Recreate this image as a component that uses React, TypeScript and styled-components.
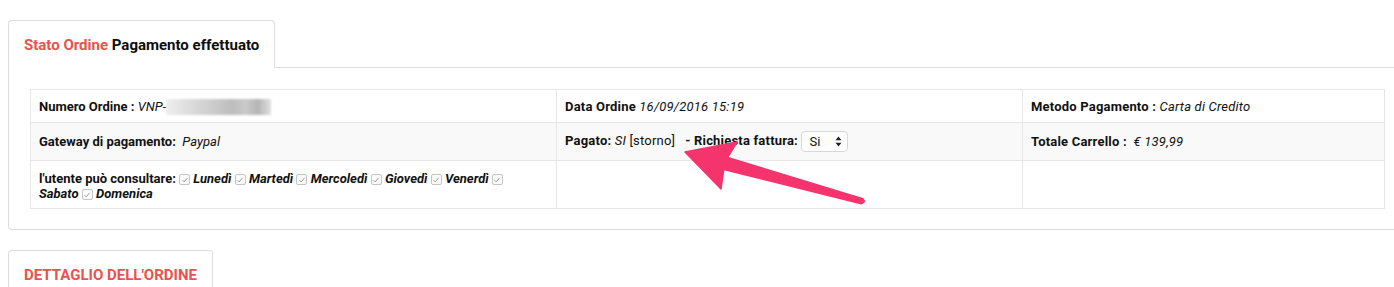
import React from 'react';
import styled, { createGlobalStyle } from 'styled-components';

const red = '#e9524e';
const line = '#dddddd';

const GlobalStyle = createGlobalStyle`
    html, body {
        margin: 0;
        padding: 0;
        overflow: hidden;
        background: #fff;
    }
    body {
        font-family: Roboto, "Liberation Sans", Arial, sans-serif;
        color: #111;
    }
`;

const days = ['Lunedì', 'Martedì', 'Mercoledì', 'Giovedì', 'Venerdì'];

const Check = () => (
    <CheckBox>
        <svg width="8" height="8" viewBox="0 0 8 8">
            <path d="M1.5 4.2 L3.2 5.9 L6.6 1.8" fill="none" stroke="#9a9a9a" strokeWidth="1" />
        </svg>
    </CheckBox>
);

const App: React.FC = () => {
    return (
        <Page>
            <GlobalStyle />
            <Section>
                <TabRow>
                    <Tab>
                        <Red>Stato Ordine</Red> Pagamento effettuato
                    </Tab>
                    <TabFiller />
                </TabRow>
                <Panel>
                    <Table>
                        <colgroup>
                            <col style={{ width: 526 }} />
                            <col style={{ width: 466 }} />
                            <col />
                        </colgroup>
                        <tbody>
                            <Row height={33}>
                                <Cell>
                                    <b>Numero Ordine :</b> <i>VNP-</i>
                                    <Blurred />
                                </Cell>
                                <Cell wide>
                                    <b>Data Ordine</b> <i>16/09/2016 15:19</i>
                                </Cell>
                                <Cell wide>
                                    <b>Metodo Pagamento :</b> <i>Carta di Credito</i>
                                </Cell>
                            </Row>
                            <Row height={38} striped>
                                <Cell>
                                    <b>Gateway di pagamento:</b>&nbsp; <i>Paypal</i>
                                </Cell>
                                <Cell wide>
                                    <b>Pagato:</b> <i>SI</i> [storno]
                                    <Spacer />
                                    <b>- Richiesta fattura:</b>{' '}
                                    <SelectBox>
                                        <Select defaultValue="si">
                                            <option value="si">Si</option>
                                            <option value="no">No</option>
                                        </Select>
                                        <svg width="7" height="11" viewBox="0 0 7 11">
                                            <path d="M3.5 0.5 L6.5 4.2 L0.5 4.2 Z M3.5 10.5 L6.5 6.8 L0.5 6.8 Z" fill="#222" />
                                        </svg>
                                    </SelectBox>
                                </Cell>
                                <Cell wide>
                                    <b>Totale Carrello :</b>&nbsp; <i>€ 139,99</i>
                                </Cell>
                            </Row>
                            <Row height={48}>
                                <DaysCell>
                                    <b>l'utente può consultare:</b>{' '}
                                    {days.map((d) => (
                                        <React.Fragment key={d}>
                                            <Check /> <Day>{d}</Day>{' '}
                                        </React.Fragment>
                                    ))}
                                    <Check />
                                    <br />
                                    <Day>Sabato</Day> <Check /> <Day>Domenica</Day>
                                </DaysCell>
                                <Cell />
                                <Cell />
                            </Row>
                        </tbody>
                    </Table>
                </Panel>
            </Section>
            <Section second>
                <TabRow>
                    <Tab>
                        <Red upper>Dettaglio dell'ordine</Red>
                    </Tab>
                </TabRow>
            </Section>
            <Annotation width="1394" height="287" viewBox="0 0 1394 287">
                <polygon
                    points="685,152 737,142 727.5,157.5 862.7,198.6 864.5,201.5 861.3,203.8 723.8,169.5 721,189"
                    fill="#f5346e"
                    stroke="#f5346e"
                    strokeWidth="1.5"
                    strokeLinejoin="round"
                />
            </Annotation>
        </Page>
    );
};

export default App;

const Page = styled.div`
    position: relative;
    width: 1394px;
    height: 287px;
    overflow: hidden;
    padding: 20px 0 0 8px;
    box-sizing: border-box;
`;

const Section = styled.div<{ second?: boolean }>`
    width: 1399px;
    margin-top: ${(p) => (p.second ? '20px' : '0')};
`;

const TabRow = styled.div`
    display: flex;
    align-items: stretch;
    height: 48px;
`;

const Tab = styled.div`
    display: flex;
    align-items: center;
    padding: 0 15px;
    border: 1px solid ${line};
    border-bottom: none;
    border-radius: 4px 4px 0 0;
    background: #fff;
    font-size: 15px;
    font-weight: 700;
    color: #0d0d0d;
    white-space: pre;
`;

const TabFiller = styled.div`
    flex: 1;
    border-bottom: 1px solid ${line};
`;

const Red = styled.span<{ upper?: boolean }>`
    color: ${red};
    text-transform: ${(p) => (p.upper ? 'uppercase' : 'none')};
`;

const Panel = styled.div`
    border: 1px solid ${line};
    border-top: none;
    border-radius: 0 0 4px 4px;
    padding: 21px 21px 20px 21px;
`;

const Table = styled.table`
    width: 1355px;
    border-collapse: collapse;
    table-layout: fixed;
    font-size: 13px;
    border: 1px solid ${line};

    b {
        font-weight: 700;
    }
    i {
        font-style: italic;
    }
`;

const Row = styled.tr<{ striped?: boolean; height: number }>`
    height: ${(p) => p.height}px;
    background: ${(p) => (p.striped ? '#f9f9f9' : '#fff')};
`;

const Cell = styled.td<{ wide?: boolean }>`
    border: 1px solid #e6e6e6;
    padding: 0 8px;
    vertical-align: middle;
    line-height: 17px;
    white-space: nowrap;
    letter-spacing: ${(p) => (p.wide ? '0.2px' : '0')};
`;

const DaysCell = styled(Cell)`
    line-height: 15px;
    padding-top: 2px;
`;

const Day = styled.span`
    font-weight: 700;
    font-style: italic;
`;

const Spacer = styled.span`
    display: inline-block;
    width: 10px;
`;

const CheckBox = styled.span`
    display: inline-flex;
    align-items: center;
    justify-content: center;
    width: 9px;
    height: 9px;
    border: 1px solid #c4c4c4;
    border-radius: 2px;
    background: #fbfbfb;
    vertical-align: -1px;
`;

const Blurred = styled.span`
    display: inline-block;
    width: 105px;
    height: 16px;
    vertical-align: -4px;
    background: linear-gradient(
        90deg,
        #eeeeee 0px,
        #e6e6e6 12px,
        #dcdcdc 24px,
        #d2d2d2 38px,
        #c8c8c8 52px,
        #bdbdbd 66px,
        #c9c9c9 80px,
        #b5b5b5 92px,
        #e2e2e2 105px
    );
    filter: blur(1.2px);
`;

const SelectBox = styled.span`
    display: inline-flex;
    align-items: center;
    gap: 9px;
    height: 19px;
    padding: 0 5px 0 7px;
    border: 1px solid #d8d8d8;
    border-radius: 4px;
    background: #fff;
    vertical-align: middle;
    letter-spacing: 0;
`;

const Select = styled.select`
    appearance: none;
    border: none;
    background: transparent;
    padding: 0;
    margin: 0;
    font-family: inherit;
    font-size: 13px;
    color: #111;
    outline: none;
`;

const Annotation = styled.svg`
    position: absolute;
    top: 0;
    left: 0;
    pointer-events: none;
`;
